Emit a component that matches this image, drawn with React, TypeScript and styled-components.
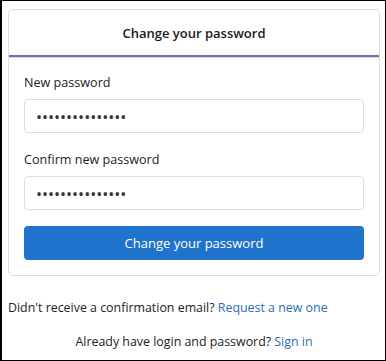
import React from "react";
import styled, { createGlobalStyle } from "styled-components";

const GlobalStyle = createGlobalStyle`
  html, body { margin: 0; padding: 0; background: #fff; }
  body { font-family: "Open Sans", "Noto Sans", sans-serif; color: #222; }
  * { box-sizing: border-box; }
`;

const Frame = styled.div`
  width: 386px;
  height: 361px;
  border: 1px solid #000;
  border-left-width: 2px;
  padding: 8px 5px 0 6px;
  overflow: hidden;
  background: #fff;
`;

const Card = styled.section`
  border: 1px solid #dcdcdc;
  border-radius: 5px;
  background: #fff;
`;

const Header = styled.header`
  height: 47px;
  display: flex;
  align-items: center;
  justify-content: center;
  border-bottom: 2px solid #7171ad;
  box-shadow: 0 1px 0 #d6d6ec;
`;

const Title = styled.h1`
  margin: 0;
  font-size: 13px;
  font-weight: 600;
  color: #1a1a1a;
`;

const Form = styled.form`
  padding: 15px 15px 15px;
  display: flex;
  flex-direction: column;
`;

const Field = styled.div`
  display: flex;
  flex-direction: column;
  margin-bottom: 16px;
`;

const Label = styled.label`
  font-size: 12.6px;
  line-height: 21px;
  margin-bottom: 6px;
  color: #222;
`;

const Input = styled.input`
  height: 34px;
  width: 100%;
  border: 1px solid #dedede;
  border-radius: 4px;
  padding: 2px 11px 0;
  font-family: "Open Sans", sans-serif;
  font-size: 16px;
  color: #333;
  outline: none;
`;

const Submit = styled.button`
  height: 34px;
  width: 100%;
  border: none;
  border-radius: 4px;
  background: #1f73cc;
  color: #fff;
  font-family: "Open Sans", sans-serif;
  font-size: 13px;
  cursor: pointer;
`;

const Note = styled.p<{ $center?: boolean }>`
  margin: 0;
  font-size: 12.4px;
  line-height: 20px;
  color: #222;
  text-align: ${(p) => (p.$center ? "center" : "left")};
`;

const Notes = styled.div`
  margin-top: 22px;
  display: flex;
  flex-direction: column;
  gap: 14px;
`;

const Link = styled.a`
  color: #2a6db5;
  text-decoration: none;
`;

export default function App() {
  return (
    <>
      <GlobalStyle />
      <Frame>
        <Card>
          <Header>
            <Title>Change your password</Title>
          </Header>
          <Form onSubmit={(e) => e.preventDefault()}>
            <Field>
              <Label htmlFor="np">New password</Label>
              <Input id="np" type="password" defaultValue="aaaaaaaaaaaaaaa" />
            </Field>
            <Field>
              <Label htmlFor="cp">Confirm new password</Label>
              <Input id="cp" type="password" defaultValue="aaaaaaaaaaaaaaa" />
            </Field>
            <Submit type="submit">Change your password</Submit>
          </Form>
        </Card>
        <Notes>
          <Note>
            Didn't receive a confirmation email? <Link href="#">Request a new one</Link>
          </Note>
          <Note $center>
            Already have login and password? <Link href="#">Sign in</Link>
          </Note>
        </Notes>
      </Frame>
    </>
  );
}
